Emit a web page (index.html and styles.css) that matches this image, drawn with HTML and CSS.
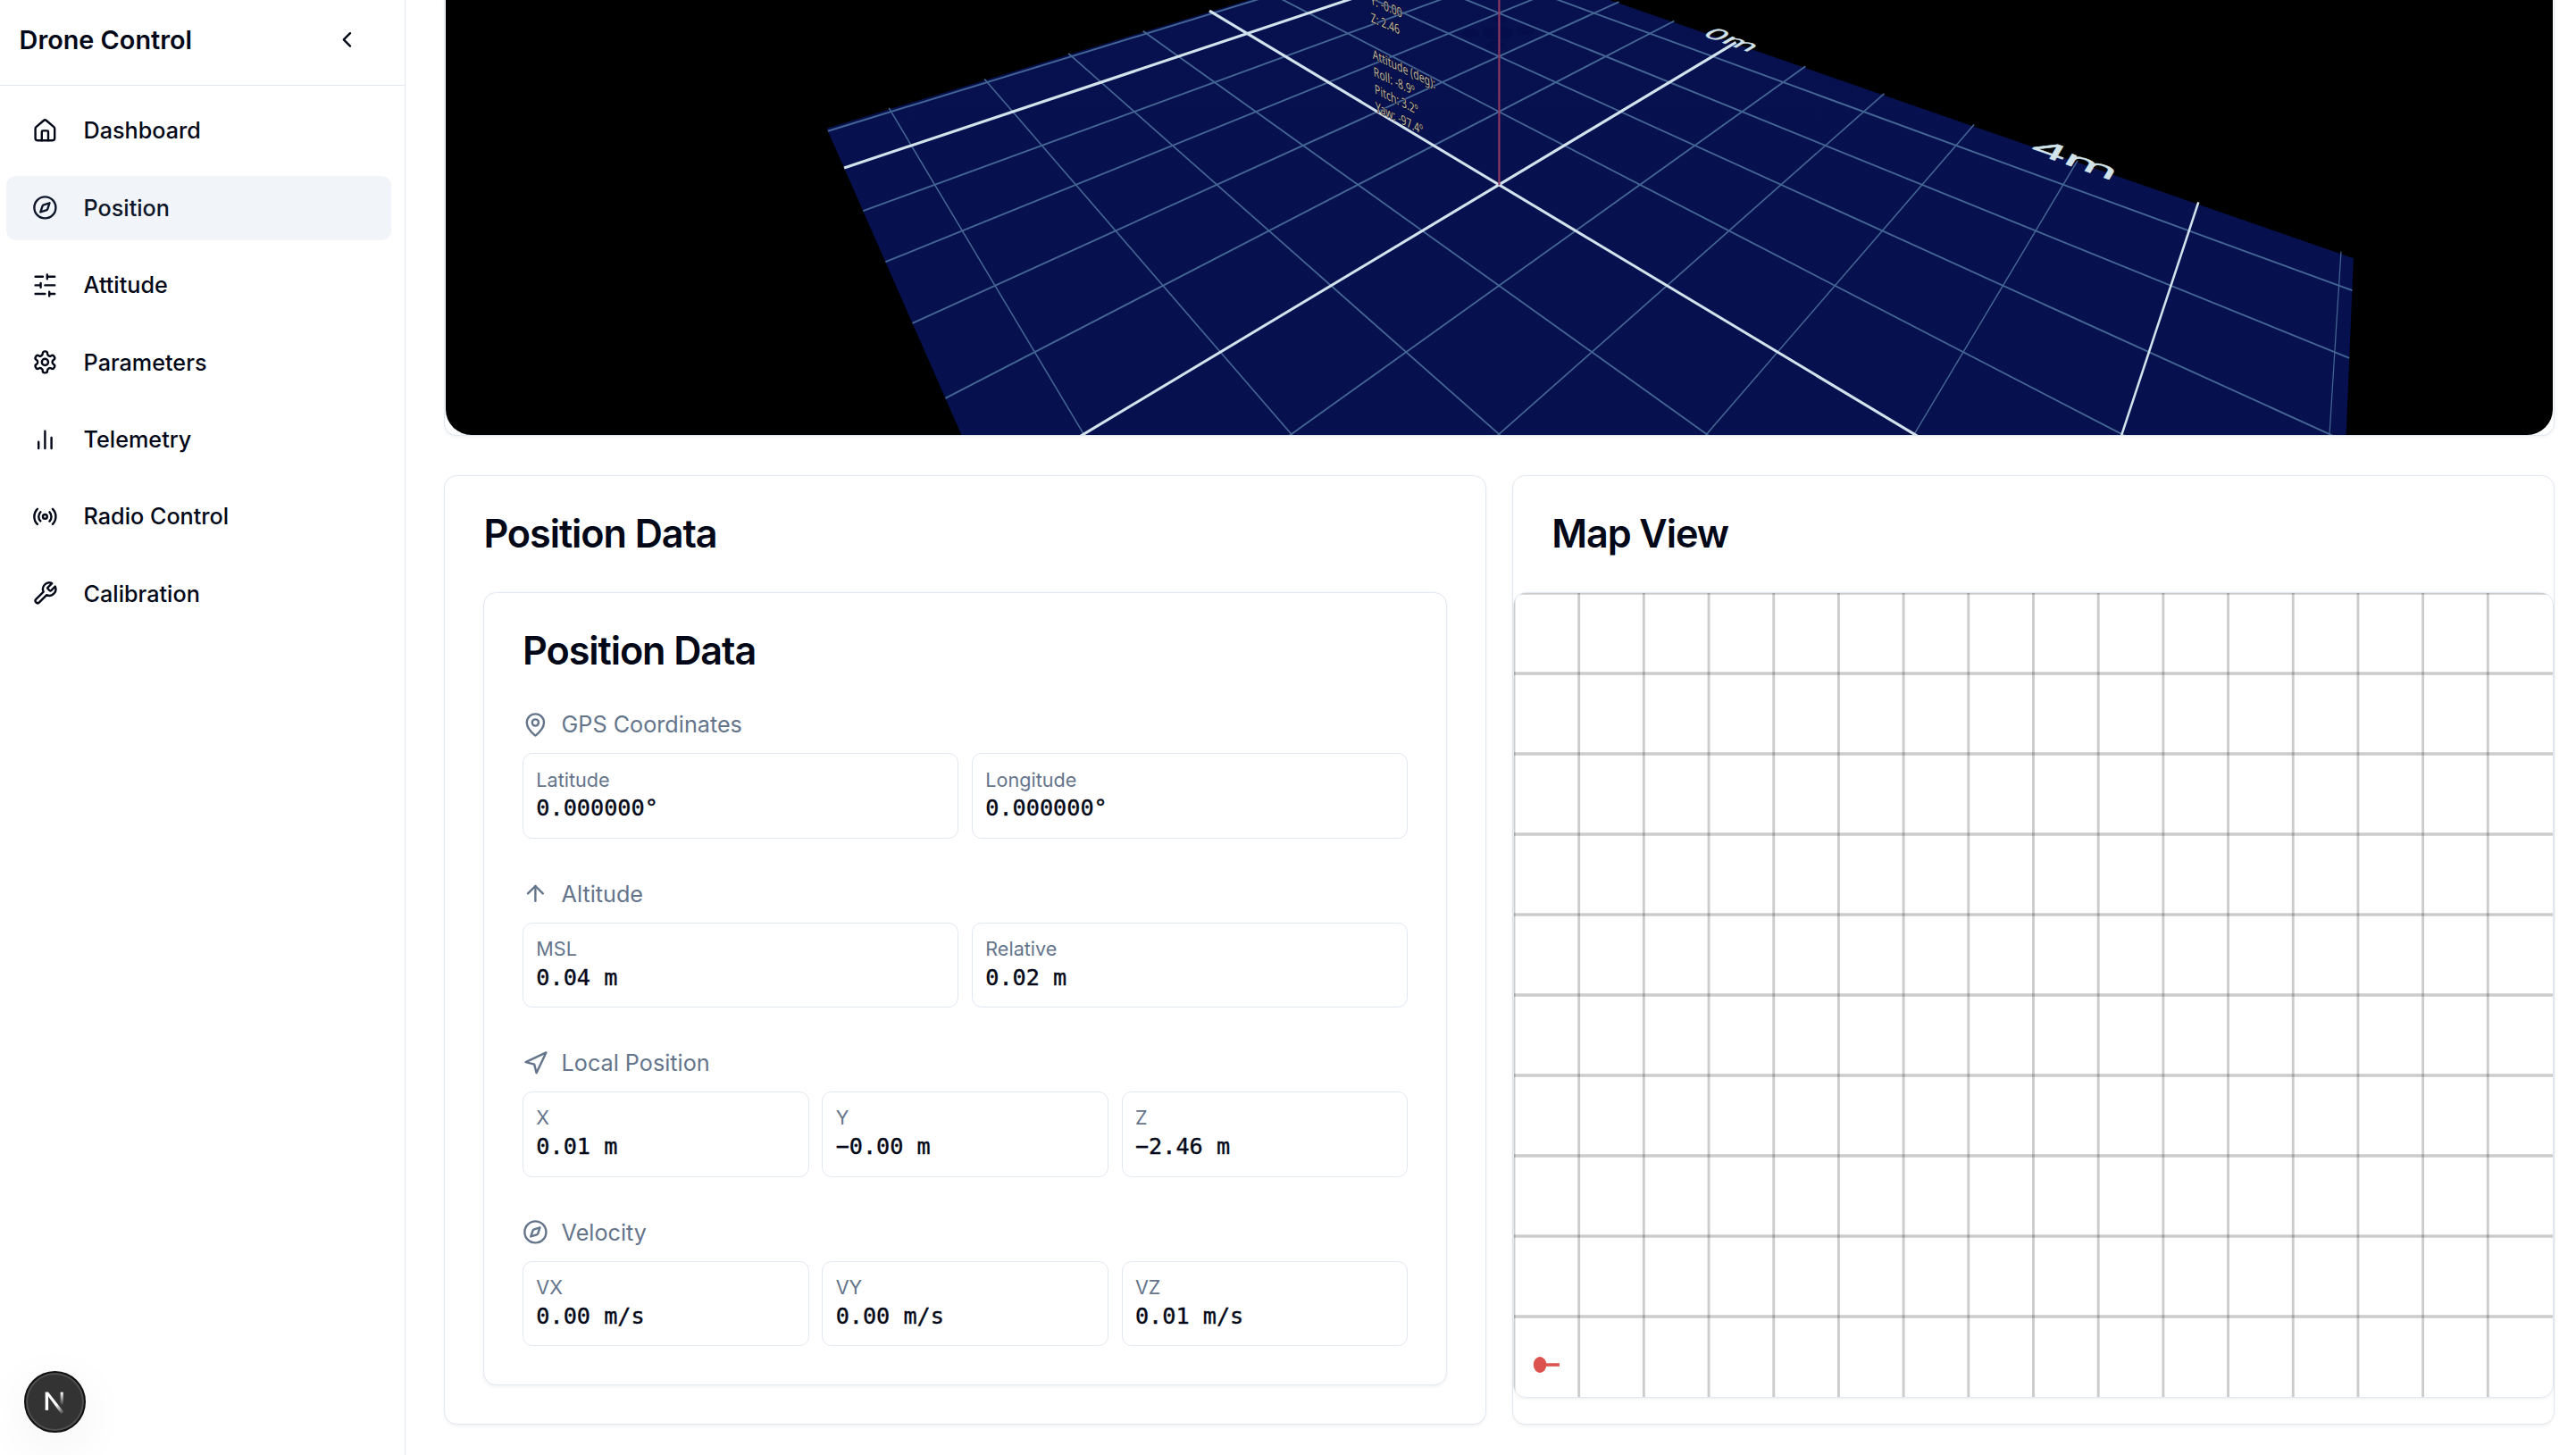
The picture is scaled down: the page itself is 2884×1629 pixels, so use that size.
FILE: index.html
```html
<!DOCTYPE html>
<html lang="en">
<head>
<meta charset="utf-8">
<title>Drone Control</title>
<link rel="stylesheet" href="styles.css">
</head>
<body>
<div class="app">
  <aside class="sidebar">
    <header class="sidebar-header">
      <h1 class="brand">Drone Control</h1>
      <button class="collapse" aria-label="Collapse sidebar">
        <svg class="icon" viewBox="0 0 24 24"><path d="m15 18-6-6 6-6"/></svg>
      </button>
    </header>
    <nav class="nav">
      <a class="nav-item">
        <svg class="icon" viewBox="0 0 24 24"><path d="M15 21v-8a1 1 0 0 0-1-1h-4a1 1 0 0 0-1 1v8"/><path d="M3 10a2 2 0 0 1 .709-1.528l7-5.999a2 2 0 0 1 2.582 0l7 5.999A2 2 0 0 1 21 10v9a2 2 0 0 1-2 2H5a2 2 0 0 1-2-2z"/></svg>
        <span>Dashboard</span>
      </a>
      <a class="nav-item active">
        <svg class="icon" viewBox="0 0 24 24"><path d="m16.24 7.76-1.804 5.411a2 2 0 0 1-1.265 1.265L7.76 16.24l1.804-5.411a2 2 0 0 1 1.265-1.265z"/><circle cx="12" cy="12" r="10"/></svg>
        <span>Position</span>
      </a>
      <a class="nav-item">
        <svg class="icon" viewBox="0 0 24 24"><path d="M21 4h-7M10 4H3M21 12h-9M8 12H3M21 20h-5M12 20H3M14 2v4M8 10v4M16 18v4"/></svg>
        <span>Attitude</span>
      </a>
      <a class="nav-item">
        <svg class="icon" viewBox="0 0 24 24"><path d="M12.22 2h-.44a2 2 0 0 0-2 2v.18a2 2 0 0 1-1 1.73l-.43.25a2 2 0 0 1-2 0l-.15-.08a2 2 0 0 0-2.73.73l-.22.38a2 2 0 0 0 .73 2.73l.15.1a2 2 0 0 1 1 1.72v.51a2 2 0 0 1-1 1.74l-.15.09a2 2 0 0 0-.73 2.73l.22.38a2 2 0 0 0 2.73.73l.15-.08a2 2 0 0 1 2 0l.43.25a2 2 0 0 1 1 1.73V20a2 2 0 0 0 2 2h.44a2 2 0 0 0 2-2v-.18a2 2 0 0 1 1-1.73l.43-.25a2 2 0 0 1 2 0l.15.08a2 2 0 0 0 2.73-.73l.22-.39a2 2 0 0 0-.73-2.73l-.15-.08a2 2 0 0 1-1-1.74v-.5a2 2 0 0 1 1-1.74l.15-.09a2 2 0 0 0 .73-2.73l-.22-.38a2 2 0 0 0-2.73-.73l-.15.08a2 2 0 0 1-2 0l-.43-.25a2 2 0 0 1-1-1.73V4a2 2 0 0 0-2-2z"/><circle cx="12" cy="12" r="3"/></svg>
        <span>Parameters</span>
      </a>
      <a class="nav-item">
        <svg class="icon" viewBox="0 0 24 24"><path d="M18 20V10M12 20V4M6 20v-6"/></svg>
        <span>Telemetry</span>
      </a>
      <a class="nav-item">
        <svg class="icon" viewBox="0 0 24 24"><path d="M4.9 19.1C1 15.2 1 8.8 4.9 4.9"/><path d="M7.8 16.2c-2.3-2.3-2.3-6.1 0-8.5"/><circle cx="12" cy="12" r="2"/><path d="M16.2 7.8c2.3 2.3 2.3 6.1 0 8.5"/><path d="M19.1 4.9C23 8.8 23 15.1 19.1 19"/></svg>
        <span>Radio Control</span>
      </a>
      <a class="nav-item">
        <svg class="icon" viewBox="0 0 24 24"><path d="M14.7 6.3a1 1 0 0 0 0 1.4l1.6 1.6a1 1 0 0 0 1.4 0l3.77-3.77a6 6 0 0 1-7.94 7.94l-6.91 6.91a2.12 2.12 0 0 1-3-3l6.91-6.91a6 6 0 0 1 7.94-7.94l-3.76 3.76z"/></svg>
        <span>Calibration</span>
      </a>
    </nav>
  </aside>

  <main class="main">
    <section class="scene-card">
      <svg class="scene" viewBox="499 0 2359 487" preserveAspectRatio="none">
        <defs>
          <linearGradient id="floor-fill" x1="0" y1="0" x2="0" y2="1">
            <stop offset="0" stop-color="#07114f"/>
            <stop offset="1" stop-color="#040d4b"/>
          </linearGradient>
        </defs>
        <polygon id="floor" class="floor"/>
        <g class="drone-shadow">
          <ellipse cx="1647" cy="37" rx="10" ry="5"/>
          <ellipse cx="1708" cy="34" rx="10" ry="5"/>
          <ellipse cx="1679" cy="22" rx="8" ry="4"/>
          <ellipse cx="1674" cy="51" rx="10" ry="5"/>
          <ellipse cx="1677" cy="37" rx="17" ry="8"/>
        </g>
        <g id="grid"></g>
        <line class="altitude-line" x1="1678.5" y1="0" x2="1678.5" y2="207"/>
        <g class="readout">
          <text transform="matrix(.71 .31 .06 1 1534.5 4.5)">Y: -0.00</text>
          <text transform="matrix(.71 .31 .06 1 1535 24.5)">Z: 2.46</text>
          <text transform="matrix(.71 .34 .06 1 1537 65.5)">Attitude (deg):</text>
          <text transform="matrix(.71 .34 .06 1 1538.2 85)">Roll: -8.9º</text>
          <text transform="matrix(.71 .35 .06 1 1539.4 104.5)">Pitch: 3.2º</text>
          <text transform="matrix(.71 .36 .06 1 1540.4 124)">Yaw: -97.4º</text>
        </g>
        <text id="label-0" class="distance">0m</text>
        <text id="label-4" class="distance">4m</text>
      </svg>
    </section>

    <div class="panels">
      <section class="card">
        <h2 class="card-title">Position Data</h2>
        <div class="card-body">
          <div class="card">
            <h2 class="card-title inner">Position Data</h2>
            <div class="groups">
              <div class="group">
                <div class="group-label">
                  <svg class="icon" viewBox="0 0 24 24"><path d="M20 10c0 4.993-5.539 10.193-7.399 11.799a1 1 0 0 1-1.202 0C9.539 20.193 4 14.993 4 10a8 8 0 0 1 16 0"/><circle cx="12" cy="10" r="3"/></svg>
                  <span>GPS Coordinates</span>
                </div>
                <div class="fields two">
                  <div class="field"><div class="name">Latitude</div><div class="value">0.000000°</div></div>
                  <div class="field"><div class="name">Longitude</div><div class="value">0.000000°</div></div>
                </div>
              </div>
              <div class="group">
                <div class="group-label">
                  <svg class="icon" viewBox="0 0 24 24"><path d="m5 12 7-7 7 7"/><path d="M12 19V5"/></svg>
                  <span>Altitude</span>
                </div>
                <div class="fields two">
                  <div class="field"><div class="name">MSL</div><div class="value">0.04 m</div></div>
                  <div class="field"><div class="name">Relative</div><div class="value">0.02 m</div></div>
                </div>
              </div>
              <div class="group">
                <div class="group-label">
                  <svg class="icon" viewBox="0 0 24 24"><polygon points="3 11 22 2 13 21 11 13 3 11"/></svg>
                  <span>Local Position</span>
                </div>
                <div class="fields three">
                  <div class="field"><div class="name">X</div><div class="value">0.01 m</div></div>
                  <div class="field"><div class="name">Y</div><div class="value">−0.00 m</div></div>
                  <div class="field"><div class="name">Z</div><div class="value">−2.46 m</div></div>
                </div>
              </div>
              <div class="group">
                <div class="group-label">
                  <svg class="icon" viewBox="0 0 24 24"><path d="m16.24 7.76-1.804 5.411a2 2 0 0 1-1.265 1.265L7.76 16.24l1.804-5.411a2 2 0 0 1 1.265-1.265z"/><circle cx="12" cy="12" r="10"/></svg>
                  <span>Velocity</span>
                </div>
                <div class="fields three">
                  <div class="field"><div class="name">VX</div><div class="value">0.00 m/s</div></div>
                  <div class="field"><div class="name">VY</div><div class="value">0.00 m/s</div></div>
                  <div class="field"><div class="name">VZ</div><div class="value">0.01 m/s</div></div>
                </div>
              </div>
            </div>
          </div>
        </div>
      </section>

      <section class="card">
        <h2 class="card-title">Map View</h2>
        <div class="map">
          <svg class="map-canvas" viewBox="0 0 800 500" preserveAspectRatio="none">
            <g id="map-grid" class="map-grid"></g>
            <g class="marker">
              <circle cx="20" cy="480" r="5"/>
              <path d="M20 480h15"/>
            </g>
          </svg>
        </div>
      </section>
    </div>
  </main>
</div>

<div class="dev-badge">
  <svg class="dev-logo" viewBox="0 0 70 70">
    <defs>
      <linearGradient id="stem" gradientUnits="userSpaceOnUse" x1="0" y1="24" x2="0" y2="39"><stop offset="0" stop-color="#fff"/><stop offset="1" stop-color="#fff" stop-opacity="0"/></linearGradient>
      <linearGradient id="slash" gradientUnits="userSpaceOnUse" x1="37" y1="38" x2="45" y2="49"><stop offset="0" stop-color="#fff"/><stop offset="1" stop-color="#fff" stop-opacity="0"/></linearGradient>
    </defs>
    <path d="M24 24h3.5v20.500H24z" fill="#fff"/>
    <path d="M24 24h3.600L45 46.500l-3 2.300z" fill="url(#slash)"/>
    <path d="M41.200 24h3.300v15h-3.300z" fill="url(#stem)"/>
  </svg>
</div>
<script src="scene.js"></script>
</body>
</html>
```

FILE: styles.css
```css
* { box-sizing: border-box; }

body {
  margin: 0;
  background: #fff;
  color: #020817;
  font-family: Inter, sans-serif;
  font-size: 25.2px;
  line-height: 36px;
  overflow: hidden;
}

.app { display: flex; height: 1629px; overflow: hidden; }

.icon {
  width: 28.8px;
  height: 28.8px;
  flex: none;
  fill: none;
  stroke: currentColor;
  stroke-width: 2;
  stroke-linecap: round;
  stroke-linejoin: round;
}

/* Sidebar */
.sidebar { width: 454px; flex: none; border-right: 1px solid #e2e8f0; }

.sidebar-header {
  display: flex;
  align-items: center;
  justify-content: space-between;
  height: 96px;
  padding: 0 50.4px 6px 21.6px;
  border-bottom: 1px solid #e2e8f0;
}

.brand { margin: 0; font-size: 28.8px; font-weight: 600; line-height: 43.2px; }

.collapse { display: flex; padding: 0; border: 0; background: none; color: inherit; }

.nav {
  display: flex;
  flex-direction: column;
  gap: 14.4px;
  padding: 14.4px 15.2px 0 7.2px;
}

.nav-item {
  display: flex;
  align-items: center;
  gap: 28.8px;
  height: 72px;
  padding: 0 28.8px;
  border-radius: 10.8px;
  font-weight: 500;
}

.nav-item.active { background: #f1f5f9; color: #0f172a; }

/* Main column */
.main {
  flex: 1;
  min-width: 0;
  display: flex;
  flex-direction: column;
  gap: 43.8px;
  padding: 0 24px 0 43.2px;
}

.scene-card {
  height: 488.4px;
  padding: 0 1px;
  border: 1px solid #e2e8f0;
  border-top: 0;
  border-radius: 0 0 14.4px 14.4px;
  box-shadow: 0 1.8px 3.6px rgba(0, 0, 0, .05);
}

.scene {
  display: block;
  width: 100%;
  height: 100%;
  background: #000;
  border-radius: 0 0 28.8px 28.8px;
}

.floor { fill: url(#floor-fill); }
.drone-shadow { fill: #030a42; opacity: .3; }
.grid-line { stroke: #446694; }
.grid-line.major { stroke: #d3e3ed; }
.altitude-line { stroke: #8f3860; stroke-width: 2.2; }

.readout {
  fill: #bdb49d;
  stroke: #0a0c2c;
  stroke-width: 1.4;
  paint-order: stroke;
  font: 14.8px "Noto Sans", sans-serif;
}

.distance {
  fill: #d3e3ea;
  stroke: #d3e3ea;
  stroke-width: .8;
  font: 49.5px "Noto Sans", sans-serif;
  text-anchor: middle;
}

/* Cards */
.panels { display: grid; grid-template-columns: 1fr 1fr; gap: 28.8px; }

.card {
  border: 1px solid #e2e8f0;
  border-radius: 14.4px;
  background: #fff;
  box-shadow: 0 1.8px 3.6px rgba(0, 0, 0, .05);
}

.card-title {
  margin: 0;
  padding: 43.2px;
  font-size: 43.2px;
  font-weight: 600;
  line-height: 43.2px;
  letter-spacing: -.025em;
}

.card-title.inner { padding-left: 42.6px; }

.card-body { padding: 0 43.2px 43px; }

.groups { display: flex; flex-direction: column; gap: 44.1px; padding: 0 42.6px 43.2px; }
.group { display: flex; flex-direction: column; gap: 13.8px; }
.group-label { display: flex; align-items: center; gap: 14.8px; color: #64748b; }

.fields { display: grid; gap: 14.4px; }
.fields.two { grid-template-columns: repeat(2, 1fr); }
.fields.three { grid-template-columns: repeat(3, 1fr); }

.field { padding: 14.4px; border: 1px solid #e2e8f0; border-radius: 10.8px; }
.name { color: #64748b; font-size: 21.6px; line-height: 28.8px; }
.value {
  font-family: "DejaVu Sans Mono", monospace;
  white-space: pre;
  -webkit-text-stroke: .4px currentColor;
}

/* Map */
.map {
  height: 902px;
  border: 1px solid #e2e8f0;
  border-radius: 14.4px;
  overflow: hidden;
  box-shadow: 0 1.8px 3.6px rgba(0, 0, 0, .05);
}

.map-canvas { display: block; width: 100%; height: 100%; }
.map-grid { stroke: #000; stroke-opacity: .2; stroke-width: 2; }
.marker { fill: #dc524c; stroke: none; }
.marker path { stroke: #dc524c; stroke-width: 2; }

/* Floating developer badge */
.dev-badge {
  position: fixed;
  left: 27px;
  bottom: 25px;
  width: 69px;
  height: 69px;
  border: 2px solid #111;
  border-radius: 50%;
  background: #333;
  box-shadow: inset 0 0 0 2px #505050, 0 14px 58px rgba(0, 0, 0, .06);
}

.dev-logo { display: block; width: 69px; height: 69px; margin: -2px; }
```

FILE: scene.js
```js
const NS = 'http://www.w3.org/2000/svg';

// Perspective projection of a floor point (u, v), in grid units, to the view.
function project(u, v) {
  const depth = 6.237 - (u + v) / 2;
  return [1678.3 + 985 * (u - v) / 2 / depth, -384.5 + 3687 / depth];
}

function addLine(parent, a, b, className, width) {
  const line = document.createElementNS(NS, 'line');
  line.setAttribute('x1', a[0]);
  line.setAttribute('y1', a[1]);
  line.setAttribute('x2', b[0]);
  line.setAttribute('y2', b[1]);
  if (className) line.setAttribute('class', className);
  if (width) line.setAttribute('stroke-width', width);
  parent.appendChild(line);
}

const U = 6.08;
const V_NEAR = 4.59;
const V_FAR = -4.555;
const corners = [[-U, V_FAR], [U, V_FAR], [U, V_NEAR], [-U, V_NEAR]];
document.getElementById('floor').setAttribute(
  'points', corners.map(([u, v]) => project(u, v).join(',')).join(' '));

const grid = document.getElementById('grid');
const lines = [];
for (let u = -6; u <= 6; u++) {
  const thin = Math.max(u, 0) * 0.11;
  const major = u % 5 === 0;
  lines.push({ a: project(u, -4.6), b: project(u, V_NEAR), major, width: (major ? 3.1 : 1.9) - thin });
}
for (let v = -4; v <= 4; v++) {
  const thin = Math.max(v, 0) * 0.09;
  lines.push({ a: project(-6.12, v), b: project(U, v), major: v === 0, width: (v === 0 ? 3.1 : 1.9) - thin });
}
lines.sort((p, q) => p.major - q.major);
lines.forEach(l => addLine(grid, l.a, l.b, l.major ? 'grid-line major' : 'grid-line', l.width));

// Distance labels lie flat on the floor, along its far edge.
function placeLabel(id, u, v) {
  const e = 0.01;
  const o = project(u, v);
  const right = project(u + e, v);
  const down = project(u, v + e);
  const m = [
    (right[0] - o[0]) / e / 100, (right[1] - o[1]) / e / 100,
    (down[0] - o[0]) / e / 100, (down[1] - o[1]) / e / 100,
    o[0], o[1],
  ];
  document.getElementById(id).setAttribute('transform', `matrix(${m.join(' ')})`);
}
placeLabel('label-0', -0.08, -4.46);
placeLabel('label-4', 3.98, -4.43);

const mapGrid = document.getElementById('map-grid');
for (let x = 0; x < 800; x += 50) addLine(mapGrid, [x, 0], [x, 500]);
for (let y = 0; y < 500; y += 50) addLine(mapGrid, [0, y], [800, y]);
```
